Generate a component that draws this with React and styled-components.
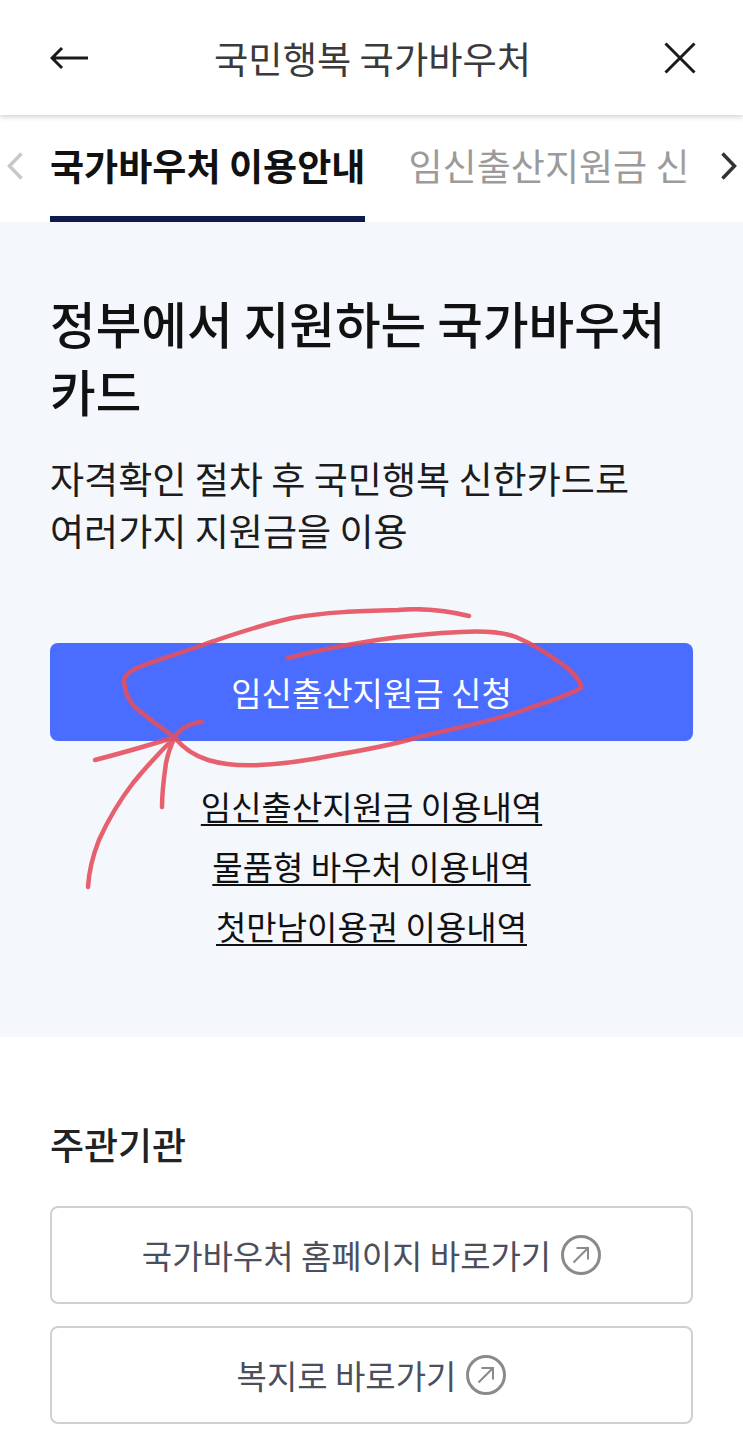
import React from "react";
import styled, { createGlobalStyle } from "styled-components";

const GlobalStyle = createGlobalStyle`
  html, body {
    margin: 0;
    padding: 0;
    background: #ffffff;
  }
  body {
    font-family: "Noto Sans CJK KR", "Noto Sans", sans-serif;
  }
`;

const Page = styled.div`
  position: relative;
  width: 743px;
  height: 1444px;
  overflow: hidden;
  background: #ffffff;
`;

const Header = styled.header`
  position: relative;
  z-index: 2;
  display: grid;
  grid-template-columns: 164px auto 1fr;
  align-items: center;
  height: 115px;
  padding: 0 47px 0 50px;
  box-sizing: border-box;
  background: #fff;
  box-shadow: 0 2px 5px rgba(0, 0, 0, 0.18);
`;

const HeaderTitle = styled.h1`
  margin: 0;
  font-size: 37.3px;
  font-weight: 400;
  color: #3a3a3c;
`;

const IconButton = styled.span`
  display: flex;
  justify-content: ${(p) => (p.$end ? "flex-end" : "flex-start")};
  color: #1a1a1a;
`;

const TabBar = styled.nav`
  display: flex;
  align-items: stretch;
  height: 107px;
  background: #fff;
`;

const TabArrow = styled.span`
  flex: 0 0 50px;
  display: flex;
  align-items: center;
  justify-content: ${(p) => (p.$right ? "flex-end" : "flex-start")};
  padding: ${(p) => (p.$right ? "0 6px 5px 0" : "0 0 5px 7px")};
  box-sizing: border-box;
`;

const TabScroll = styled.div`
  position: relative;
  flex: 1;
  display: flex;
  gap: 43px;
  overflow: hidden;
  white-space: nowrap;
  &::after {
    content: "";
    position: absolute;
    top: 0;
    right: 0;
    width: 10px;
    height: 100%;
    background: linear-gradient(to right, rgba(255, 255, 255, 0), #fff 80%);
  }
`;

const Tab = styled.div`
  flex: none;
  height: 107px;
  box-sizing: border-box;
  padding-top: 23px;
  font-size: 37.1px;
  line-height: 54px;
  font-weight: ${(p) => (p.$active ? 700 : 400)};
  color: ${(p) => (p.$active ? "#111" : "#9b9b9b")};
  border-bottom: 6px solid ${(p) => (p.$active ? "#101a4f" : "transparent")};
`;

const Hero = styled.section`
  height: 815px;
  box-sizing: border-box;
  padding: 66px 50px 0;
  background: #f4f7fc;
`;

const HeroTitle = styled.h2`
  margin: 0;
  font-size: 49.6px;
  line-height: 68px;
  font-weight: 500;
  color: #111;
`;

const HeroText = styled.p`
  margin: 28px 0 0;
  font-size: 37.1px;
  line-height: 52px;
  color: #1c1c1c;
  white-space: nowrap;
`;

const PrimaryButton = styled.button`
  display: block;
  width: 100%;
  height: 98px;
  margin-top: 87px;
  border: none;
  border-radius: 8px;
  background: #4a6dff;
  color: #fff;
  font-family: inherit;
  font-size: 33px;
`;

const LinkList = styled.div`
  display: flex;
  flex-direction: column;
  align-items: center;
  gap: 10px;
  margin-top: 40px;
`;

const HistoryLink = styled.a`
  font-size: 33px;
  line-height: 50px;
  color: #111;
  text-decoration: underline;
  text-decoration-thickness: 2px;
  text-underline-offset: 4px;
`;

const Agency = styled.section`
  padding: 80px 50px 0;
`;

const AgencyTitle = styled.h3`
  margin: 0 0 35px;
  font-size: 37px;
  line-height: 54px;
  font-weight: 500;
  color: #222;
`;

const AgencyList = styled.div`
  display: flex;
  flex-direction: column;
  gap: 22px;
`;

const OutlineButton = styled.a`
  display: flex;
  align-items: center;
  justify-content: center;
  gap: 10px;
  height: 98px;
  box-sizing: border-box;
  border: 2px solid #d0d0d0;
  border-radius: 8px;
  font-size: 33px;
  color: #4b4f5c;
`;

const Scribble = styled.svg`
  position: absolute;
  top: 0;
  left: 0;
  z-index: 3;
  pointer-events: none;
`;

const ExternalIcon = () => (
  <svg width="40" height="40" viewBox="0 0 40 40" fill="none" stroke="#8a8a8a">
    <circle cx="20" cy="20" r="18.5" strokeWidth="3" />
    <path d="M12.5 27.5 L27 13 M15.5 13 H27 V24.5" strokeWidth="2" />
  </svg>
);

const App = () => {
  return (
    <Page>
      <GlobalStyle />
      <Header>
        <IconButton>
          <svg width="38" height="24" viewBox="0 0 38 24" fill="none" stroke="currentColor" strokeWidth="3">
            <path d="M38 12 H2 M12 2 L2 12 L12 22" />
          </svg>
        </IconButton>
        <HeaderTitle>국민행복 국가바우처</HeaderTitle>
        <IconButton $end>
          <svg width="32" height="32" viewBox="0 0 32 32" fill="none" stroke="currentColor" strokeWidth="3">
            <path d="M1.5 1.5 L30.5 30.5 M30.5 1.5 L1.5 30.5" />
          </svg>
        </IconButton>
      </Header>

      <TabBar>
        <TabArrow>
          <svg width="16" height="28" viewBox="0 0 16 28" fill="none" stroke="#c8c8c8" strokeWidth="3.5">
            <path d="M14.5 1.5 L2.5 14 L14.5 26.5" />
          </svg>
        </TabArrow>
        <TabScroll>
          <Tab $active>국가바우처 이용안내</Tab>
          <Tab>임신출산지원금 신청</Tab>
        </TabScroll>
        <TabArrow $right>
          <svg width="16" height="28" viewBox="0 0 16 28" fill="none" stroke="#333" strokeWidth="3.5">
            <path d="M1.5 1.5 L13.5 14 L1.5 26.5" />
          </svg>
        </TabArrow>
      </TabBar>

      <Hero>
        <HeroTitle>
          정부에서 지원하는 국가바우처
          <br />
          카드
        </HeroTitle>
        <HeroText>
          자격확인 절차 후 국민행복 신한카드로
          <br />
          여러가지 지원금을 이용
        </HeroText>
        <PrimaryButton>임신출산지원금 신청</PrimaryButton>
        <LinkList>
          <HistoryLink>임신출산지원금 이용내역</HistoryLink>
          <HistoryLink>물품형 바우처 이용내역</HistoryLink>
          <HistoryLink>첫만남이용권 이용내역</HistoryLink>
        </LinkList>
      </Hero>

      <Agency>
        <AgencyTitle>주관기관</AgencyTitle>
        <AgencyList>
          <OutlineButton>
            국가바우처 홈페이지 바로가기
            <ExternalIcon />
          </OutlineButton>
          <OutlineButton>
            복지로 바로가기
            <ExternalIcon />
          </OutlineButton>
        </AgencyList>
      </Agency>

      {/* 빨간 펜 표시 */}
      <Scribble width="743" height="1444" viewBox="0 0 743 1444" fill="none" stroke="#e5505f" strokeWidth="4.5" strokeLinecap="round" strokeLinejoin="round" opacity="0.9">
        <path d="M469 616 C445 610 420 608 398 610 C360 611 325 612 292 618 C260 625 235 634 208 643 C185 652 155 660 137 668 C128 672 124 677 124 682 C125 692 128 700 135 707 C148 719 163 728 175 738 C185 750 195 756 208 760 C225 765 242 766 259 765 C285 764 310 760 335 755 C365 750 392 745 419 737 C455 728 490 722 524 710 C545 702 565 697 581 688 C582 682 575 675 566 667 C550 655 535 645 516 637 C500 631 480 631 461 632 C433 633 405 636 377 640 C345 645 315 651 288 658" />
        <path d="M88 887 C89 870 93 855 99 840 C108 820 120 800 133 783 C146 767 160 752 175 737" />
        <path d="M95 760 C122 753 150 745 175 737" />
        <path d="M162 807 C162 790 164 777 166 763 C168 753 171 745 175 737 C179 729 190 723 202 722" />
      </Scribble>
    </Page>
  );
};

export default App;
